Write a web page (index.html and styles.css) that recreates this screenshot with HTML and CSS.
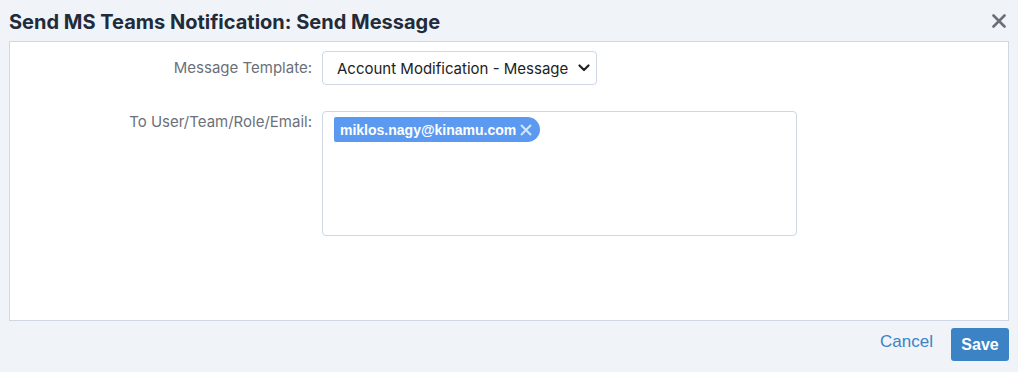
FILE: index.html
```html
<!DOCTYPE html>
<html lang="en">
<head>
    <meta charset="UTF-8">
    <title>Send MS Teams Notification</title>
    <link rel="stylesheet" href="styles.css">
</head>
<body>
    <div class="dialog">
        <div class="dialog-header">
            <h1>Send MS Teams Notification: Send Message</h1>
            <button class="close-btn" aria-label="Close">
                <svg width="14" height="14" viewBox="0 0 14 14"><path d="M1.5 1.5 L12.5 12.5 M12.5 1.5 L1.5 12.5" stroke="#6b6f76" stroke-width="2.6" stroke-linecap="round"/></svg>
            </button>
        </div>

        <div class="dialog-body">
            <div class="form-row">
                <label class="form-label">Message Template:</label>
                <div class="select-box">
                    <span>Account Modification - Message</span>
                    <svg width="12" height="8" viewBox="0 0 12 8"><path d="M1.5 1.5 L6 6 L10.5 1.5" fill="none" stroke="#222" stroke-width="2.2" stroke-linecap="round" stroke-linejoin="round"/></svg>
                </div>
            </div>
            <div class="form-row">
                <label class="form-label">To User/Team/Role/Email:</label>
                <div class="tag-area">
                    <span class="tag">miklos.nagy@kinamu.com
                        <svg width="12" height="12" viewBox="0 0 12 12"><path d="M1 1 L11 11 M11 1 L1 11" stroke="#d6e6fb" stroke-width="2"/></svg>
                    </span>
                </div>
            </div>
        </div>

        <div class="dialog-footer">
            <a href="#" class="cancel-link">Cancel</a>
            <button class="save-btn">Save</button>
        </div>
    </div>
</body>
</html>
```

FILE: styles.css
```css
:root {
    --background: #f0f3f8;
    --surface: #ffffff;
    --border: #cfd6e4;
    --text-primary: #222b3a;
    --text-secondary: #6b7079;
    --primary-color: #3b83c5;
    --tag-color: #5b9af0;
}

* {
    margin: 0;
    padding: 0;
    box-sizing: border-box;
}

body {
    font-family: 'Inter', sans-serif;
    background: var(--background);
    color: var(--text-primary);
    width: 1018px;
    height: 372px;
    overflow: hidden;
}

.dialog {
    padding: 0 9px 0 9px;
}

.dialog-header {
    display: flex;
    justify-content: space-between;
    align-items: center;
    height: 41px;
    padding-top: 2px;
}

.dialog-header h1 {
    font-size: 20px;
    font-weight: 700;
    color: var(--text-primary);
    margin-left: 0;
}

.close-btn {
    background: none;
    border: none;
    width: 14px;
    height: 14px;
    margin-right: 3px;
    margin-top: -2px;
    cursor: pointer;
}

.dialog-body {
    background: var(--surface);
    border: 1px solid var(--border);
    height: 280px;
    padding-top: 9px;
}

.form-row {
    display: flex;
    align-items: flex-start;
    margin-bottom: 26px;
}

.form-label {
    width: 312px;
    text-align: right;
    padding-right: 10px;
    font-size: 15px;
    color: var(--text-secondary);
    line-height: 34px;
}

.form-row:nth-child(2) .form-label {
    line-height: 22px;
}

.select-box {
    width: 275px;
    height: 34px;
    border: 1px solid var(--border);
    border-radius: 4px;
    display: flex;
    justify-content: space-between;
    align-items: center;
    padding: 0 6px 0 14px;
    font-size: 15px;
    color: #222;
    background: var(--surface);
}

.tag-area {
    width: 475px;
    height: 125px;
    border: 1px solid var(--border);
    border-radius: 4px;
    padding: 5px 11px;
}

.tag {
    display: inline-flex;
    align-items: center;
    gap: 4px;
    height: 25px;
    background: var(--tag-color);
    color: #fff;
    font-family: 'Liberation Sans', Arial, sans-serif;
    font-weight: 700;
    font-size: 14px;
    padding: 0 8px 0 6px;
    border-radius: 2px 13px 13px 2px;
}

.dialog-footer {
    display: flex;
    justify-content: flex-end;
    align-items: center;
    gap: 18px;
    padding-top: 7px;
}

.cancel-link {
    color: var(--primary-color);
    text-decoration: none;
    font-family: 'Liberation Sans', Arial, sans-serif;
    font-size: 17px;
    margin-top: -6px;
}

.save-btn {
    background: var(--primary-color);
    color: #fff;
    border: none;
    border-radius: 3px;
    width: 58px;
    height: 33px;
    font-family: 'Liberation Sans', Arial, sans-serif;
    font-weight: 700;
    font-size: 16px;
    margin-right: 0;
}
```
